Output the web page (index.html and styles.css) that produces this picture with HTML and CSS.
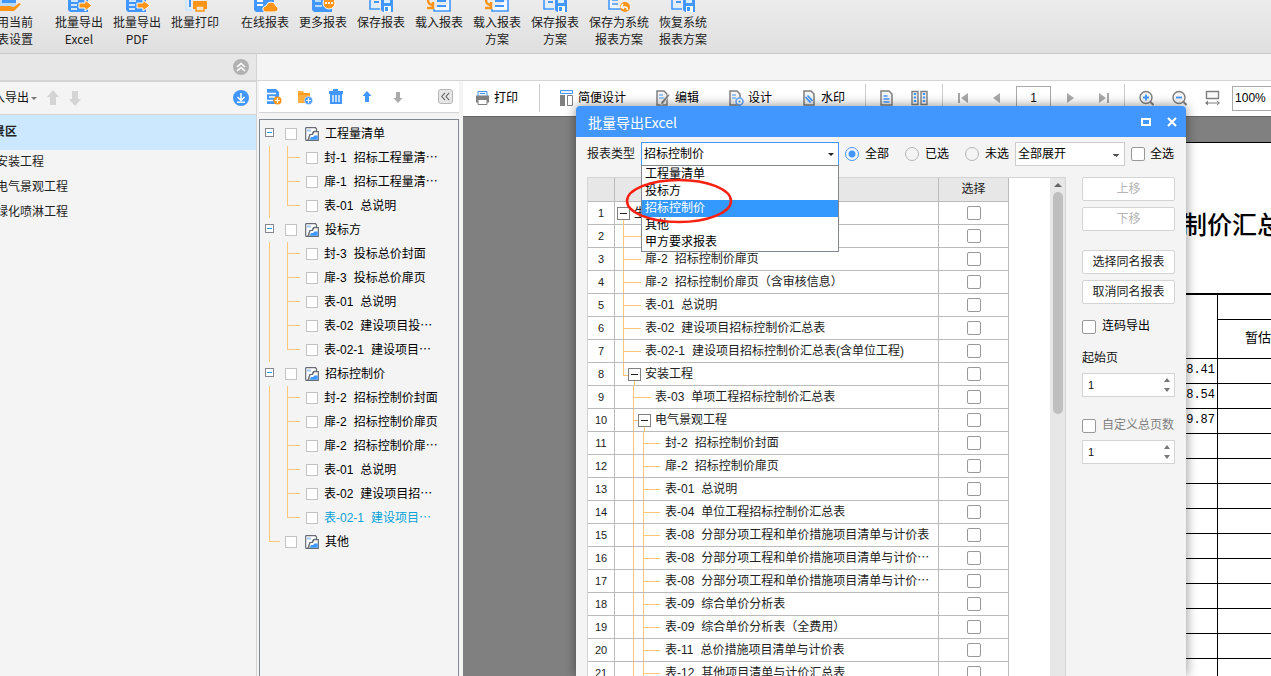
FILE: index.html
```html
<!DOCTYPE html>
<html lang="zh-CN">
<head>
<meta charset="utf-8">
<title>批量导出Excel</title>
<link rel="stylesheet" href="styles.css">
</head>
<body>
<svg class="defs" aria-hidden="true">
  <symbol id="folder" viewBox="0 0 14 14"><path d="M.7 1.200Q.7.700 1.200.7H10.500l1 1.300v2L8.500 4.500 7 7.500H5L3 13.300H1.200Q.7 13.300.7 12.800z" fill="#fff" stroke="#666b73" stroke-width="1.200"/><path d="M2 2.500h4v2H2z" fill="#9ccbff"/><path d="M3.200 13.300 5 7.500h2.500L9 4.600h4.300v8.700z" fill="#fff" stroke="#666b73" stroke-width="1.200"/><path d="M4.500 12.700 6 10h2l1.500-1.500h3.200v4.200z" fill="#3f97ff"/></symbol>
  <symbol id="savebox" viewBox="0 0 28 12"><path d="M3 0v9h10" fill="#dceeff" stroke="#4297ff" stroke-width="1.600"/><path d="M7 2h5" stroke="#4297ff" stroke-width="2"/><path d="M14 0h12v12H16l-2-2z" fill="#4297ff"/><path d="M17 0h6v3h-6z" fill="#dceeff"/><path d="M17 6h7v6h-7z" fill="#fff"/><path d="M18 7h3v4h-3z" fill="#4297ff"/></symbol>
  <symbol id="loadbox" viewBox="0 0 28 12"><path d="M9 9v2h16V0" fill="#f5faff" stroke="#4297ff" stroke-width="1.600"/><path d="M12 1h9M12 6h9" stroke="#4297ff" stroke-width="2"/><path d="M3 0q0 4 4 5M8 2v6H2" fill="none" stroke="#ff9518" stroke-width="2.400"/></symbol>
  <symbol id="exportdoc" viewBox="0 0 28 12"><path d="M3 0h20v12H5l-2-2z" fill="#4297ff"/><path d="M6 1h7M6 5h6M6 9h6" stroke="#fff" stroke-width="1.600"/><path d="M14 3h6V0l7 5.500-7 5.500V8h-6z" fill="#ff9518" stroke="#fff"/></symbol>
</svg>
<div class="app">
  <header class="ribbon">
    <button class="tool first"><svg viewBox="0 0 34 12"><path d="M0 0h17v5l-4 4H0z" fill="#b9dbff"/><path d="M3 0h14v3H3z" fill="#4297ff"/><path d="M0 6h10l5 1 5-4 2 1-7 7H0z" fill="#ff9518"/></svg><span>用当前<br>表设置</span></button>
    <button class="tool"><svg viewBox="0 0 28 12"><use href="#exportdoc"/></svg><span>批量导出<br>Excel</span></button>
    <button class="tool"><svg viewBox="0 0 28 12"><use href="#exportdoc"/></svg><span>批量导出<br>PDF</span></button>
    <button class="tool"><svg viewBox="0 0 28 12"><path d="M5 0v10h6" fill="#dceeff" stroke="#cfe6ff" stroke-width="2"/><path d="M9 0v7" stroke="#4297ff" stroke-width="2"/><path d="M12 1h14v8H12z" fill="#ff9518"/><path d="M15 6h8v5h-8z" fill="#ffe3bd" stroke="#ff9518" stroke-width="1.500"/></svg><span>批量打印</span></button>
    <button class="tool online"><svg viewBox="0 0 28 12"><path d="M3 0h20v12H5l-2-2z" fill="#4297ff"/><path d="M6 1h6M6 5h6" stroke="#fff" stroke-width="2"/><path d="M14 12q-3-1-2-4 1-2 3-2 1-4 5-4t5 4q3 1 2 4-1 2-3 2z" fill="#ff9518" stroke="#fff"/></svg><span>在线报表</span></button>
    <button class="tool"><svg viewBox="0 0 28 12"><path d="M3 0h20v12H5l-2-2z" fill="#4297ff"/><path d="M6 1h6M6 6h7" stroke="#b9dbff" stroke-width="2"/><circle cx="20" cy="3" r="6" fill="#ff9518" stroke="#fff"/><path d="M16 3h8" stroke="#fff" stroke-width="1.800" stroke-dasharray="2 1"/></svg><span>更多报表</span></button>
    <button class="tool"><svg viewBox="0 0 28 12"><use href="#savebox"/></svg><span>保存报表</span></button>
    <button class="tool"><svg viewBox="0 0 28 12"><use href="#loadbox"/></svg><span>载入报表</span></button>
    <button class="tool"><svg viewBox="0 0 28 12"><use href="#loadbox"/></svg><span>载入报表<br>方案</span></button>
    <button class="tool"><svg viewBox="0 0 28 12"><use href="#savebox"/></svg><span>保存报表<br>方案</span></button>
    <button class="tool wide"><svg viewBox="0 0 28 12"><path d="M4 0v9h12" fill="#f0f7ff" stroke="#4297ff" stroke-width="1.600"/><path d="M7 0h6M7 4h6" stroke="#4297ff" stroke-width="1.600"/><circle cx="20" cy="7" r="5" fill="#ff9518"/><path d="M18 4 16 7l3 2M17 7h3q3 0 2 3" fill="none" stroke="#fff" stroke-width="1.400"/></svg><span>保存为系统<br>报表方案</span></button>
    <button class="tool"><svg viewBox="0 0 28 12"><use href="#savebox"/></svg><span>恢复系统<br>报表方案</span></button>
  </header>

  <main class="work">
    <aside class="projects">
      <div class="strip"><button class="round grey" aria-label="收起"><svg viewBox="0 0 16 16"><path d="M4 8l4-3.500L12 8M4 12l4-3.500 4 3.500" fill="none" stroke="#fff" stroke-width="1.600"/></svg></button></div>
      <div class="project-bar">
        <button class="menu">入导出<i class="caret"></i></button>
        <svg class="arrow" viewBox="0 0 12 16"><path d="M6 0l6 7H9v8H3V7H0z" fill="#d4d4d4"/></svg>
        <svg class="arrow" viewBox="0 0 12 16"><path d="M6 16l6-7H9V1H3v8H0z" fill="#d4d4d4"/></svg>
        <button class="round blue" aria-label="下载"><svg viewBox="0 0 16 16"><path d="M8 3v7M4.500 7 8 10.500 11.500 7M4 12.300h8" fill="none" stroke="#fff" stroke-width="1.500"/></svg></button>
      </div>
      <div class="project current">景区</div>
      <div class="project">安装工程</div>
      <div class="project">电气景观工程</div>
      <div class="project">绿化喷淋工程</div>
    </aside>

    <div class="content">
      <div class="blank"></div>
      <div class="panes">
        <section class="reports">
          <div class="report-bar">
            <svg class="i16" viewBox="0 0 16 16"><path d="M1 0h9l3 3v5a5 5 0 0 0-4 7H1z" fill="#4297ff"/><path d="M1 4.500h9M3 8h6M1 11.500h6" stroke="#fff" stroke-width="1.300"/><circle cx="11.500" cy="11.500" r="4" fill="#ff9518"/><path d="M9 11.500h5M11.500 9v5" stroke="#fff" stroke-width="1.200"/></svg>
            <svg class="i16" viewBox="0 0 16 16"><path d="M1 2h5l1 2h6v10H1z" fill="#ffae42"/><path d="M1 5h12" stroke="#ff9518" stroke-width="1.500"/><circle cx="11.500" cy="11.500" r="4" fill="#4297ff" stroke="#fff" stroke-width=".5"/><path d="M9 11.500h5M11.500 9v5" stroke="#fff" stroke-width="1.200"/></svg>
            <svg class="i16" viewBox="0 0 16 16"><path d="M5 0h5v2h5v3h-1v10H2V5H1V2h4z" fill="#4297ff"/><path d="M5 6v7M8 6v7M11 6v7" stroke="#fff" stroke-width="1.300"/></svg>
            <svg class="i16" viewBox="0 0 16 16"><path d="M8 2l4.500 5H10v6H6V7H3.500z" fill="#4297ff"/></svg>
            <svg class="i16" viewBox="0 0 16 16"><path d="M8 14l4.500-5H10V3H6v6H3.500z" fill="#aaa"/></svg>
            <button class="fold" aria-label="折叠"><svg viewBox="0 0 14 14"><path d="M6.500 3 3 7l3.500 4M11 3 7.500 7l3.500 4" fill="none" stroke="#666" stroke-width="1.200"/></svg></button>
          </div>
          <div class="report-tree">
            <div class="branch"><i class="minus"></i><label><input type="checkbox"><svg class="i14" viewBox="0 0 14 14"><use href="#folder"/></svg>工程量清单</label></div>
            <div class="leaf"><label><input type="checkbox"><span class="code">封-1</span>招标工程量清⋯</label></div>
            <div class="leaf"><label><input type="checkbox"><span class="code">扉-1</span>招标工程量清⋯</label></div>
            <div class="leaf end"><label><input type="checkbox"><span class="code">表-01</span>总说明</label></div>
            <div class="branch"><i class="minus"></i><label><input type="checkbox"><svg class="i14" viewBox="0 0 14 14"><use href="#folder"/></svg>投标方</label></div>
            <div class="leaf"><label><input type="checkbox"><span class="code">封-3</span>投标总价封面</label></div>
            <div class="leaf"><label><input type="checkbox"><span class="code">扉-3</span>投标总价扉页</label></div>
            <div class="leaf"><label><input type="checkbox"><span class="code">表-01</span>总说明</label></div>
            <div class="leaf"><label><input type="checkbox"><span class="code">表-02</span>建设项目投⋯</label></div>
            <div class="leaf end"><label><input type="checkbox"><span class="code">表-02-1</span>建设项目⋯</label></div>
            <div class="branch"><i class="minus"></i><label><input type="checkbox"><svg class="i14" viewBox="0 0 14 14"><use href="#folder"/></svg>招标控制价</label></div>
            <div class="leaf"><label><input type="checkbox"><span class="code">封-2</span>招标控制价封面</label></div>
            <div class="leaf"><label><input type="checkbox"><span class="code">扉-2</span>招标控制价扉页</label></div>
            <div class="leaf"><label><input type="checkbox"><span class="code">扉-2</span>招标控制价扉⋯</label></div>
            <div class="leaf"><label><input type="checkbox"><span class="code">表-01</span>总说明</label></div>
            <div class="leaf"><label><input type="checkbox"><span class="code">表-02</span>建设项目招⋯</label></div>
            <div class="leaf end active"><label><input type="checkbox"><span class="code">表-02-1</span>建设项目⋯</label></div>
            <div class="branch last"><i class="elbow"></i><label><input type="checkbox"><svg class="i14" viewBox="0 0 14 14"><use href="#folder"/></svg>其他</label></div>
          </div>
        </section>

        <section class="viewer">
          <div class="view-bar">
            <div class="group print">
              <button><svg class="i15" viewBox="0 0 15 15"><path d="M3 1h9v5H3z" fill="#e9f4ff" stroke="#4297ff"/><path d="M5 3h5" stroke="#4297ff"/><path d="M1 5h13v7H1z" fill="#808080"/><path d="M3 9h9v5H3z" fill="#fff" stroke="#808080"/></svg>打印</button>
            </div>
            <div class="group edit">
              <button><svg class="i15" viewBox="0 0 15 16"><path d="M1.500.5h12v3h-12z" fill="#e9f4ff" stroke="#4297ff"/><path d="M1 5h5v11H1z" fill="#808080"/><path d="M8.500 5.500h5v10h-5z" fill="#fff" stroke="#808080"/></svg>简便设计</button>
              <button><svg class="i15" viewBox="0 0 15 16"><path d="M1 1h7l3 3v11H1z" fill="#f4f4f4" stroke="#808080" stroke-width="1.500"/><path d="M3 5h4M3 8h5" stroke="#4297ff"/><path d="M14 5 7 14l-2 1v-3l7-8z" fill="#808080" stroke="#fff" stroke-width=".6"/></svg>编辑</button>
              <button><svg class="i15" viewBox="0 0 15 16"><path d="M1 1h7l3 3v11H1z" fill="#f4f4f4" stroke="#808080" stroke-width="1.500"/><path d="M3 5h4M3 8h4" stroke="#4297ff"/><circle cx="10.500" cy="11.500" r="3.500" fill="#fff" stroke="#65aaff" stroke-width="1.600"/><circle cx="10.500" cy="11.500" r="1" fill="#4297ff"/></svg>设计</button>
              <button><svg class="i15" viewBox="0 0 15 16"><path d="M2 1h7l3 3v11H2z" fill="#f4f4f4" stroke="#808080" stroke-width="1.500"/><path d="M3.500 7l5 5.500M5.500 5.500l5 5.500" stroke="#4297ff" stroke-width="1.800"/></svg>水印</button>
            </div>
            <div class="group pages">
              <button aria-label="单页"><svg class="i15" viewBox="0 0 15 16"><path d="M2 1h8l3 3v11H2z" fill="#f4f4f4" stroke="#808080" stroke-width="1.500"/><path d="M4.500 6h4M4.500 9h6M4.500 12h6" stroke="#4297ff" stroke-width="1.500"/></svg></button>
              <button aria-label="双页"><svg class="i17" viewBox="0 0 17 16"><path d="M1 1.500h6v13H1zM10 1.500h6v13h-6z" fill="#f4f4f4" stroke="#808080" stroke-width="1.400"/><path d="M4 3v10M13 3v10" stroke="#4297ff" stroke-width="2.400" stroke-dasharray="2 1.500"/></svg></button>
            </div>
            <div class="group pager">
              <button aria-label="首页"><svg viewBox="0 0 19 12"><path d="M0 1h2v10H0zM10 1v10L3 6z" fill="#aaa"/></svg></button>
              <button aria-label="上一页"><svg class="tri" viewBox="0 0 7 12"><path d="M7 1v10L0 6z" fill="#aaa"/></svg></button>
              <input type="text" value="1" aria-label="页码">
              <button aria-label="下一页"><svg class="tri" viewBox="0 0 7 12"><path d="M0 1v10l7-5z" fill="#aaa"/></svg></button>
              <button aria-label="末页"><svg viewBox="0 0 19 12"><path d="M17 1h2v10h-2zM9 1v10l7-5z" fill="#aaa"/></svg></button>
            </div>
            <div class="group zoom">
              <button aria-label="放大"><svg class="i15" viewBox="0 0 15 15"><circle cx="7" cy="7" r="6" fill="#f7f7f7" stroke="#808080" stroke-width="1.400"/><path d="M11 11l3.500 3.500" stroke="#808080" stroke-width="2"/><path d="M4 7h6M7 4v6" stroke="#4297ff" stroke-width="1.800"/></svg></button>
              <button aria-label="缩小"><svg class="i15" viewBox="0 0 15 15"><circle cx="7" cy="7" r="6" fill="#f7f7f7" stroke="#808080" stroke-width="1.400"/><path d="M11 11l3.500 3.500" stroke="#808080" stroke-width="2"/><path d="M4 7h6" stroke="#4297ff" stroke-width="1.800"/></svg></button>
              <button aria-label="适合宽度"><svg class="i15" viewBox="0 0 15 15"><path d="M1.500 1h12v7h-12z" fill="#fafafa" stroke="#808080" stroke-width="1.400"/><path d="M0 12.500 3 10v5zM15 12.500 12 10v5zM2 12h11v1H2z" fill="#808080"/></svg></button>
              <select aria-label="缩放"><option>100%</option></select>
            </div>
          </div>
          <div class="canvas">
            <div class="paper">
              <h1>制价汇总</h1>
              <table class="sheet">
                <tr class="top"><td rowspan="2"></td><td></td></tr>
                <tr class="sub"><td>暂估</td></tr>
                <tr><td>88.41</td><td></td></tr>
                <tr><td>8.54</td><td></td></tr>
                <tr><td>69.87</td><td></td></tr>
                <tr><td></td><td></td></tr><tr><td></td><td></td></tr><tr><td></td><td></td></tr>
                <tr><td></td><td></td></tr><tr><td></td><td></td></tr><tr><td></td><td></td></tr>
                <tr><td></td><td></td></tr><tr><td></td><td></td></tr><tr><td></td><td></td></tr>
                <tr><td></td><td></td></tr><tr><td></td><td></td></tr>
              </table>
            </div>
          </div>
        </section>
      </div>
    </div>
  </main>

  <section class="dialog" role="dialog" aria-labelledby="dialog-title">
    <div class="title">
      <span id="dialog-title">批量导出Excel</span>
      <button aria-label="最大化"><svg viewBox="0 0 10 10"><path d="M1 2h8v6H1z" fill="none" stroke="#fff" stroke-width="2"/></svg></button>
      <button aria-label="关闭"><svg viewBox="0 0 10 10"><path d="M1 1l8 8M9 1 1 9" stroke="#fff" stroke-width="2.200"/></svg></button>
    </div>
    <div class="filters">
      <label class="type" for="type">报表类型</label>
      <div class="combo">
        <select id="type"><option>招标控制价</option></select>
        <ul class="options">
          <li>工程量清单</li><li>投标方</li><li class="chosen">招标控制价</li><li>其他</li><li>甲方要求报表</li>
        </ul>
        <svg class="ring" viewBox="0 0 110 48"><ellipse cx="55" cy="24" rx="52" ry="21" fill="none" stroke="#f8200f" stroke-width="2.500"/></svg>
      </div>
      <div class="scope">
        <label><input type="radio" name="scope" checked>全部</label>
        <label><input type="radio" name="scope">已选</label>
        <label><input type="radio" name="scope">未选</label>
      </div>
      <select class="expand" aria-label="展开"><option>全部展开</option></select>
      <label class="all"><input class="tick" type="checkbox">全选</label>
    </div>
    <div class="body">
      <div class="grid">
        <table class="list">
          <colgroup><col class="c-no"><col class="c-name"><col class="c-pick"></colgroup>
          <tr><th></th><th></th><th>选择</th></tr>
          <tr><td>1</td><td><div class="node root"><i class="box"></i>生</div></td><td><input class="tick" type="checkbox" aria-label="1"></td></tr>
          <tr><td>2</td><td><div class="node l1"></div></td><td><input class="tick" type="checkbox" aria-label="2"></td></tr>
          <tr><td>3</td><td><div class="node l1"><span class="code">扉-2</span>招标控制价扉页</div></td><td><input class="tick" type="checkbox" aria-label="3"></td></tr>
          <tr><td>4</td><td><div class="node l1"><span class="code">扉-2</span>招标控制价扉页（含审核信息）</div></td><td><input class="tick" type="checkbox" aria-label="4"></td></tr>
          <tr><td>5</td><td><div class="node l1"><span class="code">表-01</span>总说明</div></td><td><input class="tick" type="checkbox" aria-label="5"></td></tr>
          <tr><td>6</td><td><div class="node l1"><span class="code">表-02</span>建设项目招标控制价汇总表</div></td><td><input class="tick" type="checkbox" aria-label="6"></td></tr>
          <tr><td>7</td><td><div class="node l1"><span class="code">表-02-1</span>建设项目招标控制价汇总表(含单位工程)</div></td><td><input class="tick" type="checkbox" aria-label="7"></td></tr>
          <tr><td>8</td><td><div class="node b1"><i class="box"></i>安装工程</div></td><td><input class="tick" type="checkbox" aria-label="8"></td></tr>
          <tr><td>9</td><td><div class="node l2"><span class="code">表-03</span>单项工程招标控制价汇总表</div></td><td><input class="tick" type="checkbox" aria-label="9"></td></tr>
          <tr><td>10</td><td><div class="node b2"><i class="box"></i>电气景观工程</div></td><td><input class="tick" type="checkbox" aria-label="10"></td></tr>
          <tr><td>11</td><td><div class="node l3"><span class="code">封-2</span>招标控制价封面</div></td><td><input class="tick" type="checkbox" aria-label="11"></td></tr>
          <tr><td>12</td><td><div class="node l3"><span class="code">扉-2</span>招标控制价扉页</div></td><td><input class="tick" type="checkbox" aria-label="12"></td></tr>
          <tr><td>13</td><td><div class="node l3"><span class="code">表-01</span>总说明</div></td><td><input class="tick" type="checkbox" aria-label="13"></td></tr>
          <tr><td>14</td><td><div class="node l3"><span class="code">表-04</span>单位工程招标控制价汇总表</div></td><td><input class="tick" type="checkbox" aria-label="14"></td></tr>
          <tr><td>15</td><td><div class="node l3"><span class="code">表-08</span>分部分项工程和单价措施项目清单与计价表</div></td><td><input class="tick" type="checkbox" aria-label="15"></td></tr>
          <tr><td>16</td><td><div class="node l3"><span class="code">表-08</span>分部分项工程和单价措施项目清单与计价⋯</div></td><td><input class="tick" type="checkbox" aria-label="16"></td></tr>
          <tr><td>17</td><td><div class="node l3"><span class="code">表-08</span>分部分项工程和单价措施项目清单与计价⋯</div></td><td><input class="tick" type="checkbox" aria-label="17"></td></tr>
          <tr><td>18</td><td><div class="node l3"><span class="code">表-09</span>综合单价分析表</div></td><td><input class="tick" type="checkbox" aria-label="18"></td></tr>
          <tr><td>19</td><td><div class="node l3"><span class="code">表-09</span>综合单价分析表（全费用）</div></td><td><input class="tick" type="checkbox" aria-label="19"></td></tr>
          <tr><td>20</td><td><div class="node l3"><span class="code">表-11</span>总价措施项目清单与计价表</div></td><td><input class="tick" type="checkbox" aria-label="20"></td></tr>
          <tr><td>21</td><td><div class="node l3"><span class="code">表-12</span>其他项目清单与计价汇总表</div></td><td><input class="tick" type="checkbox" aria-label="21"></td></tr>
        </table>
        <div class="scroll"><i class="up"></i><i class="thumb"></i></div>
      </div>
      <div class="side">
        <button class="btn" disabled>上移</button>
        <button class="btn" disabled>下移</button>
        <button class="btn apart">选择同名报表</button>
        <button class="btn">取消同名报表</button>
        <label class="check"><input class="tick" type="checkbox">连码导出</label>
        <label class="start" for="start">起始页</label>
        <div class="spin"><input type="text" id="start" value="1"><i class="up"></i><i class="down"></i></div>
        <label class="check muted"><input class="tick" type="checkbox">自定义总页数</label>
        <div class="spin"><input type="text" value="1" aria-label="总页数"><i class="up"></i><i class="down"></i></div>
      </div>
    </div>
  </section>
</div>
</body>
</html>
```
FILE: styles.css
```css
* { box-sizing: border-box; }
body { margin: 0; font: 12px/17px "Liberation Sans", "Noto Sans CJK SC", sans-serif; color: #111; }
button, input, select { font: inherit; color: inherit; margin: 0; }
button { padding: 0; border: 0; background: none; white-space: nowrap; }
svg { display: block; flex: none; }
i { display: block; flex: none; }
.defs { position: absolute; width: 0; height: 0; }
.app { position: relative; display: flex; flex-direction: column; height: 100vh; overflow: hidden; background: #f4f4f4; }
.code { margin-right: 7px; }
.i14 { width: 14px; height: 14px; }
.i15 { width: 15px; height: 16px; }
.i16 { width: 16px; height: 16px; }
.i17 { width: 17px; height: 16px; }

.ribbon { display: flex; flex: none; height: 54px; background: linear-gradient(#ececec, #dfdfdf); border-bottom: 1px solid #c9c9c9; font-family: "Noto Sans CJK SC", sans-serif; }
.tool { display: flex; flex-direction: column; align-items: center; justify-content: flex-start; gap: 1px; width: 58px; flex: none; color: #222; }
.tool svg { width: 28px; height: 12px; }
.tool.first { width: 33px; margin-right: 17px; align-items: flex-end; }
.tool.first svg { width: 34px; }
.tool.online { margin-left: 12px; }
.tool.wide { width: 70px; }

.work { display: flex; flex: 1; min-height: 0; }
.projects { width: 257px; flex: none; border-right: 1px solid #d4d4d4; overflow: hidden; }
.strip { display: flex; align-items: center; justify-content: flex-end; height: 28px; padding-right: 7px; background: #e7e7e7; border-bottom: 2px solid #d4d4d4; }
.round { width: 16px; height: 16px; border-radius: 50%; }
.round.grey { background: #b1b1b1; }
.round.blue { background: #4297ff; margin-left: auto; }
.project-bar { display: flex; align-items: center; gap: 10px; height: 33px; padding-right: 7px; border-bottom: 1px solid #d4d4d4; }
.menu { display: flex; align-items: center; gap: 2px; margin-left: -7px; }
.caret { border: 3px solid transparent; border-top-color: #777; border-bottom: 0; }
.arrow { width: 12px; height: 16px; }
.project { display: flex; align-items: center; height: 25px; margin-left: -4px; color: #222; }
.project.current { height: 35px; margin: 0; text-indent: -7px; background: #cce8ff; font-weight: bold; }

.content { display: flex; flex-direction: column; flex: 1; min-width: 0; }
.blank { height: 27px; flex: none; border-bottom: 1px solid #d4d4d4; }
.panes { display: flex; flex: 1; min-height: 0; }
.reports { display: flex; flex-direction: column; width: 206px; flex: none; padding: 0 4px 0 2px; }
.report-bar { display: flex; align-items: center; gap: 15px; height: 32px; flex: none; padding: 0 6px 0 7px; background: #fff; border-bottom: 1px solid #d4d4d4; }
.fold { width: 15px; height: 15px; margin-left: auto; background: #e7e7e7; border: 1px solid #b5b5b5; border-radius: 3px; }
.report-tree { flex: 1; margin-top: 6px; padding-top: 2px; border: 1px solid #828790; border-bottom: 0; overflow: hidden; color: #000; }
.branch, .leaf { display: flex; align-items: center; height: 24px; white-space: nowrap; }
.branch { padding-left: 5px; }
.branch label { display: flex; align-items: center; gap: 7px; margin-left: 11px; }
.branch svg { margin: 0 -1px 0 1px; }
.branch.last label { margin-left: 5px; }
.report-tree input, .tick { appearance: none; width: 12px; height: 12px; flex: none; background: #fff; border: 1px solid #c3c3c3; }
.minus { width: 9px; height: 9px; margin-top: -3px; border: 1px solid #828790; background: linear-gradient(#1ba1e2, #1ba1e2) center / 5px 1px no-repeat #fff; }
.elbow { width: 11px; height: 12px; margin: -12px 0 0 4px; border: solid #ffc77a; border-width: 0 0 1px 1px; }
.leaf { margin-left: 9px; border-left: 1px solid #ffc77a; padding-left: 17px; }
.leaf::before { content: ""; width: 12px; height: 24px; border-left: 1px solid #ffc77a; background: linear-gradient(#ffc77a, #ffc77a) 0 11px / 100% 1px no-repeat; }
.leaf.end::before { height: 12px; margin-bottom: 12px; }
.leaf label { display: flex; align-items: center; margin-left: 6px; }
.leaf input { margin-right: 6px; }
.active { color: #0aa2d8; }

.viewer { display: flex; flex-direction: column; flex: 1; min-width: 0; }
.view-bar { display: flex; height: 35px; flex: none; background: #fff; }
.group { display: flex; align-items: center; flex: none; border-right: 1px solid #ccc; height: 28px; margin-top: 3px; padding: 0 20px; }
.group button { display: flex; align-items: center; gap: 4px; color: #000; }
.group.print { padding: 0 21px 0 12px; }
.group.edit { gap: 30px; padding-left: 19px; }
.group.pages { gap: 17px; padding: 0 14px 0 13px; }
.group.pager { gap: 16px; padding: 0 15px; }
.pager svg { width: 19px; height: 12px; }
.pager svg.tri { width: 7px; }
.pager input { width: 35px; height: 25px; padding: 0; text-align: center; background: #fff; border: 1px solid #aaa; }
.group.zoom { gap: 18px; padding: 0 0 0 14px; border: 0; }
.zoom select { appearance: none; width: 60px; height: 25px; margin-left: -6px; padding: 0 2px; background: #fff; border: 1px solid #aaa; color: #000; }
.canvas { flex: 1; min-height: 0; overflow: hidden; padding: 25px 0 0 620px; background: #808080; border-top: 1px solid #666; }
.paper { width: 400px; height: 700px; background: #fff; border-top: 1px solid #000; color: #000; }
.paper h1 { margin: 0; padding: 64px 0 50px 99px; font-size: 25px; line-height: 36px; font-weight: 500; white-space: nowrap; }
.sheet { width: 400px; table-layout: fixed; border-collapse: collapse; border-top: 2px solid #000; font-size: 13px; }
.sheet td { height: 25px; padding: 0 2px 0 0; border: 1px solid #000; line-height: 17px; font-family: "Liberation Mono", "Noto Sans CJK SC", monospace; font-size: 12px; }
.sheet td:first-child { width: 134px; text-align: right; }
.sheet .top td { border-top: 2px solid #000; }
.sheet .sub td { width: auto; height: 39px; padding-left: 27px; text-align: left; font-size: 13px; }

.dialog { position: absolute; top: 106px; left: 576px; right: 85px; bottom: 0; display: flex; flex-direction: column; background: #f4f4f4; border-radius: 4px 4px 0 0; box-shadow: 0 0 12px rgba(0, 0, 0, .45); }
.title { display: flex; align-items: center; gap: 16px; height: 31px; flex: none; padding: 0 9px 0 12px; background: #4297ff; border-radius: 4px 4px 0 0; color: #fff; font: 14px/18px "Noto Sans CJK SC", sans-serif; }
.title span { flex: 1; }
.title svg { width: 10px; height: 10px; }
.filters { display: flex; align-items: center; padding: 5px 11px 0; height: 29px; flex: none; color: #000; white-space: nowrap; }
.filters .type { width: 54px; color: #222; }
.filters select { appearance: none; height: 24px; width: 100%; padding: 0 2px; border: 1px solid #4297ff; border-radius: 0; color: #000; background: #fff; }
.filters label { display: flex; align-items: center; gap: 6px; }
.combo { position: relative; width: 198px; }
.combo::after { content: ""; position: absolute; right: 5px; top: 11px; border: 3px solid transparent; border-top-color: #222; border-bottom: 0; }
.options { position: absolute; z-index: 1; top: 23px; left: 0; width: 198px; margin: 0; padding: 0; list-style: none; background: #fff; border: 1px solid #828790; }
.options li { padding-left: 3px; line-height: 17px; }
.options .chosen { background: #3399ff; color: #fff; }
.ring { position: absolute; z-index: 2; left: -17px; top: 35px; width: 110px; height: 48px; }
.scope { display: flex; gap: 16px; margin: 0 6px; }
.scope input { appearance: none; width: 14px; height: 14px; border: 1px solid #b5b5b5; border-radius: 50%; }
.scope input:checked { border-color: #4297ff; background: radial-gradient(#4297ff 3px, #f4f4f4 4px); }
.filters .expand { width: 110px; border-color: #ccc; background: linear-gradient(225deg, #555 50%, transparent 50%) 97px 11px / 3px 3px no-repeat, linear-gradient(135deg, #555 50%, transparent 50%) 100px 11px / 3px 3px no-repeat, #fff; }
.filters .all { gap: 5px; margin-left: 6px; }
.tick { width: 14px; height: 14px; border: 1px solid #999; border-radius: 2px; }

.body { display: flex; flex: 1; min-height: 0; gap: 16px; padding: 11px 11px 0; }
.grid { display: flex; flex: 1; justify-content: space-between; overflow: hidden; background: #fff; border: 1px solid #d4d4d4; border-bottom: 0; }
.list { width: 421px; flex: none; align-self: flex-start; table-layout: fixed; border-collapse: separate; border-spacing: 0; color: #222; }
.c-no { width: 27px; }
.c-name { width: 324px; }
.c-pick { width: 70px; }
.list th { height: 24px; padding: 0; font-weight: normal; background: #e7e7e7; border: solid #bbb; border-width: 0 1px 1px 0; }
.list td { height: 23px; padding: 0; border: solid #bbb; border-width: 0 1px 1px 0; text-align: center; line-height: 17px; }
.list td:first-child { font-size: 11px; }
.list .tick { display: block; margin: 0 auto; }
.node { position: relative; display: flex; align-items: center; height: 22px; white-space: nowrap; }
.node::before { content: ""; flex: none; align-self: stretch; }
.l1, .b1 { padding-left: 8px; }
.l2, .l3, .b2 { padding-left: 18px; }
.l1::before, .l2::before { width: 17px; margin-right: 4px; border-left: 1px solid #ffc77a; background: linear-gradient(#ffc77a, #ffc77a) center / 100% 1px no-repeat; }
.l3::before { width: 27px; margin-right: 4px; border-left: 1px solid #ffc77a; background: linear-gradient(#ffc77a, #ffc77a) 9px 0 / 1px 100% no-repeat, linear-gradient(#ffc77a, #ffc77a) 9px 50% / 17px 1px no-repeat; }
.b1::before { width: 4px; height: 12px; align-self: flex-start; border: solid #ffc77a; border-width: 0 0 1px 1px; }
.b2::before { width: 4px; border-left: 1px solid #ffc77a; background: linear-gradient(#ffc77a, #ffc77a) center / 100% 1px no-repeat; }
.root { padding-left: 2px; }
.box { position: relative; width: 13px; height: 13px; margin-right: 4px; border: 1px solid #808080; background: linear-gradient(#222, #222) center / 7px 1px no-repeat #fff; }
.box::after { content: ""; position: absolute; left: 5px; top: 12px; width: 1px; height: 5px; background: #ffc77a; }
.scroll { display: flex; flex-direction: column; align-items: center; gap: 5px; width: 15px; padding-top: 5px; background: #e7e7e7; }
.up { border: 4px solid transparent; border-bottom-color: #666; border-top: 0; }
.thumb { width: 10px; height: 222px; border-radius: 5px; background: #bfbfbf; }

.side { display: flex; flex-direction: column; gap: 6px; width: 93px; flex: none; white-space: nowrap; }
.btn { height: 24px; flex: none; background: #fff; border: 1px solid #d4d4d4; border-radius: 2px; color: #222; }
.btn:disabled { color: #b5b5b5; }
.btn.apart { margin-top: 13px; }
.check { display: flex; align-items: center; gap: 6px; height: 17px; margin-top: 8px; color: #000; }
.start { margin: 9px 0 0; }
.spin { position: relative; display: flex; }
.spin input { width: 100%; height: 24px; padding: 0 5px; background: #fff; border: 1px solid #d4d4d4; font-size: 11px; }
.spin i { position: absolute; right: 5px; top: 5px; border-width: 4px 3px; }
.spin .up { border-top-width: 0; border-bottom-color: #777; }
.down { border-style: solid; border-color: #777 transparent transparent; }
.spin .down { top: 15px; border-bottom-width: 0; }
.muted { margin-top: 14px; color: #808080; }
```
